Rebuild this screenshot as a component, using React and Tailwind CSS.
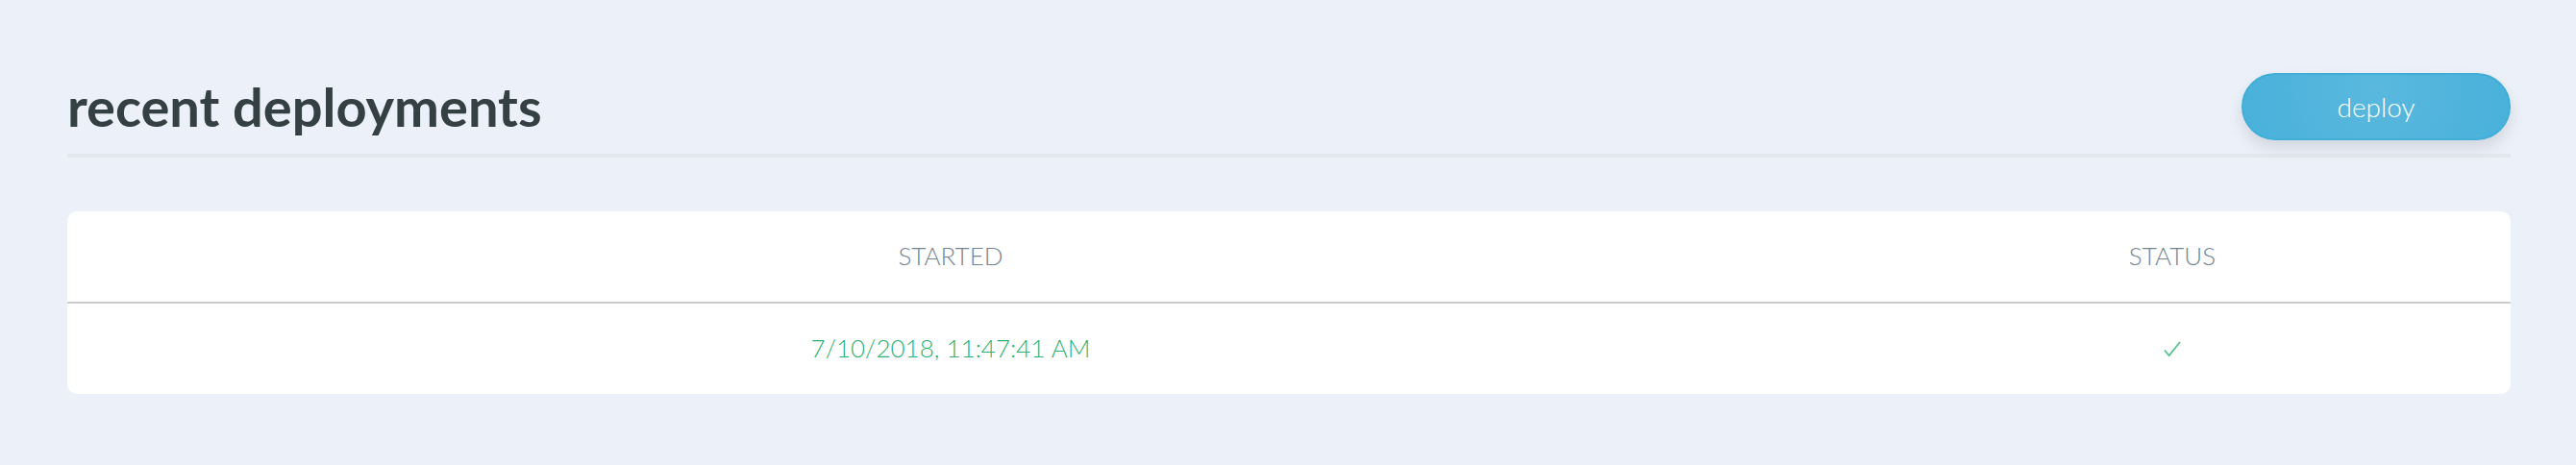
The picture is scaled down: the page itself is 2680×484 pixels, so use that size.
export default function App() {
  return (
    <main className="min-h-screen bg-[#ecf0f9] pt-[76px] pr-[68px] pl-[70px] font-['Lato',sans-serif]">
      <header className="flex items-start justify-between border-b-4 border-[#e4e8ee] pb-3.5">
        <h1 className="text-[56px] leading-[70px] font-bold text-[#344042]">recent deployments</h1>
        <button
          type="button"
          className="h-[70px] w-[280px] rounded-full border-2 border-[#42aed8] bg-[radial-gradient(circle_at_50%_20%,#5ab8de,#48b1da)] text-[28px] font-light text-white shadow-[0_8px_16px_rgba(0,0,0,0.11)]"
        >
          deploy
        </button>
      </header>
      <div className="mt-14 overflow-hidden rounded-[10px] bg-white">
        <table className="w-full table-fixed border-separate border-spacing-0 text-center text-[26px] leading-9">
          <thead>
            <tr className="text-[#748594]">
              <th scope="col" className="w-[72.3%] border-b-2 border-[#cccccc] pt-7 pb-[30px] font-light">STARTED</th>
              <th scope="col" className="border-b-2 border-[#cccccc] pt-7 pb-[30px] font-light">STATUS</th>
            </tr>
          </thead>
          <tbody>
            <tr className="font-light text-[#2bb173]">
              <td className="pt-7 pb-[30px]">7/10/2018, 11:47:41 AM</td>
              <td className="pt-7 pb-[30px]">
                <svg
                  role="img"
                  aria-label="Succeeded"
                  viewBox="0 0 20 20"
                  className="mx-auto size-5"
                  fill="none"
                  stroke="#55c48f"
                  strokeWidth="1.8"
                >
                  <path d="M2 12.5 6.6 18 18 4" />
                </svg>
              </td>
            </tr>
          </tbody>
        </table>
      </div>
    </main>
  );
}
